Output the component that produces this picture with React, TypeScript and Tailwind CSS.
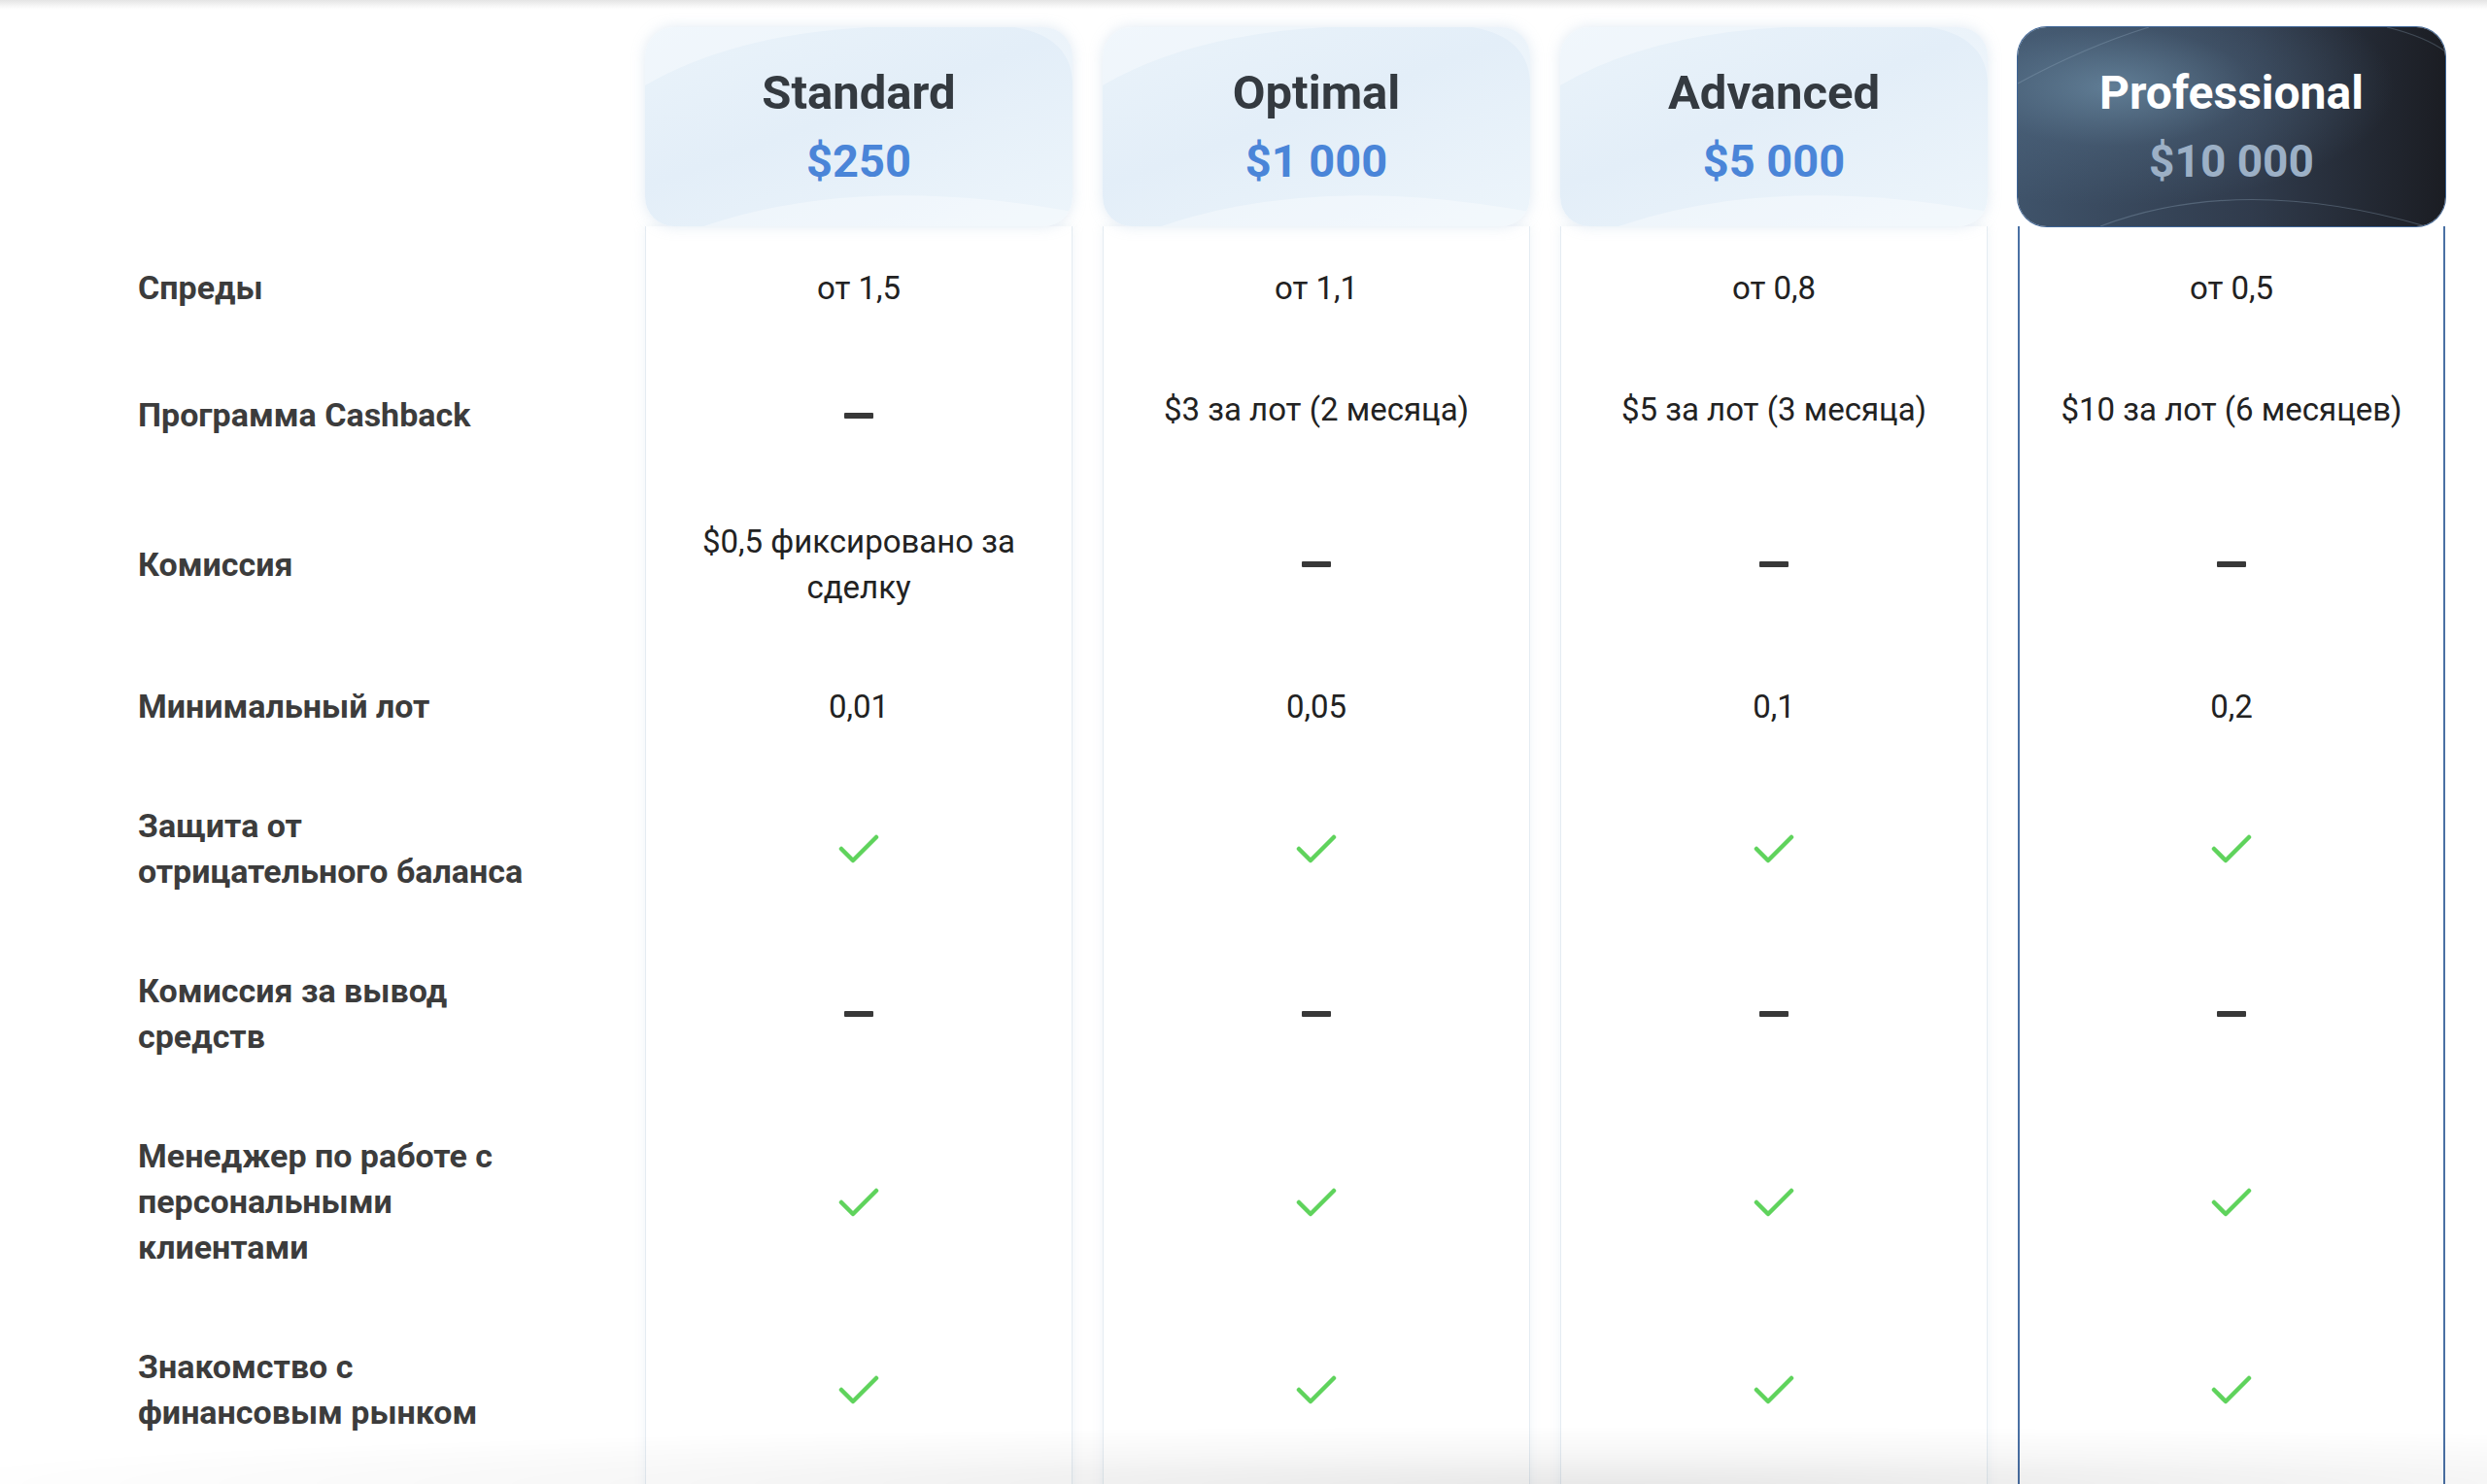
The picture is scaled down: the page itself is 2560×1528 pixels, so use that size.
import React from "react";

type Cell = string | string[] | "DASH" | "CHECK";

const Dash = () => <div className="w-[30px] h-[6px] bg-[#383838] rounded-[1px]" />;

const Check = () => (
  <svg width="42" height="32" viewBox="0 0 42 32" fill="none">
    <polyline points="3,16 15,28 39,4" stroke="#5fd35c" strokeWidth="4.5" strokeLinecap="round" strokeLinejoin="round" />
  </svg>
);

const rows: { label: string[]; h: string; values: Cell[]; shift?: boolean }[] = [
  { label: ["Спреды"], h: "h-[126px]", values: ["от 1,5", "от 1,1", "от 0,8", "от 0,5"] },
  {
    label: ["Программа Cashback"],
    h: "h-[137px]",
    values: ["DASH", "$3 за лот (2 месяца)", "$5 за лот (3 месяца)", "$10 за лот (6 месяцев)"],
    shift: true,
  },
  { label: ["Комиссия"], h: "h-[170px]", values: [["$0,5 фиксировано за", "сделку"], "DASH", "DASH", "DASH"] },
  { label: ["Минимальный лот"], h: "h-[123px]", values: ["0,01", "0,05", "0,1", "0,2"] },
  { label: ["Защита от", "отрицательного баланса"], h: "h-[170px]", values: ["CHECK", "CHECK", "CHECK", "CHECK"] },
  { label: ["Комиссия за вывод", "средств"], h: "h-[170px]", values: ["DASH", "DASH", "DASH", "DASH"] },
  {
    label: ["Менеджер по работе с", "персональными", "клиентами"],
    h: "h-[217px]",
    values: ["CHECK", "CHECK", "CHECK", "CHECK"],
  },
  { label: ["Знакомство с", "финансовым рынком"], h: "h-[170px]", values: ["CHECK", "CHECK", "CHECK", "CHECK"] },
  { label: [""], h: "h-[120px]", values: ["", "", "", ""] },
];

const plans = [
  { name: "Standard", price: "$250" },
  { name: "Optimal", price: "$1 000" },
  { name: "Advanced", price: "$5 000" },
  { name: "Professional", price: "$10 000", dark: true },
];

function renderCell(v: Cell, shift?: boolean) {
  if (v === "DASH") return <Dash />;
  if (v === "CHECK") return <Check />;
  const lines = Array.isArray(v) ? v : [v];
  return (
    <div className={`text-center text-[33px] leading-[47px] text-[#222222] ${shift ? "pb-[12px]" : ""}`}>
      {lines.map((l, i) => (
        <div key={i}>{l}</div>
      ))}
    </div>
  );
}

function LightHeader({ name, price }: { name: string; price: string }) {
  return (
    <div className="relative h-[205px] rounded-[30px] overflow-hidden bg-[linear-gradient(160deg,#eaf3fa_0%,#e3eef8_45%,#edf5fb_100%)] shadow-[0_0_14px_rgba(170,195,220,0.35)] flex flex-col items-center pt-[38px]">
      <svg className="absolute inset-0 w-full h-full" viewBox="0 0 440 205" preserveAspectRatio="none">
        <path d="M0 60 Q 120 -10 330 0 L 0 0 Z" fill="#ffffff" opacity="0.35" />
        <path d="M60 205 Q 220 150 440 190 L 440 205 Z" fill="#ffffff" opacity="0.35" />
        <path d="M380 0 Q 440 10 440 60 L 440 0 Z" fill="#ffffff" opacity="0.3" />
      </svg>
      <div className="relative text-[49px] leading-[60px] font-bold text-[#343a40]">{name}</div>
      <div className="relative mt-[10px] text-[47px] leading-[60px] font-bold text-[#4a85d8]">{price}</div>
    </div>
  );
}

function DarkHeader({ name, price }: { name: string; price: string }) {
  return (
    <div className="relative h-[205px] rounded-[30px] overflow-hidden bg-[radial-gradient(ellipse_at_22%_30%,#607d95_0%,rgba(80,105,130,0.4)_30%,rgba(0,0,0,0)_60%),linear-gradient(90deg,#3f536a_0%,#303b4c_55%,#1b1d23_100%)] flex flex-col items-center pt-[38px] ring-1 ring-[#3d6496]">
      <svg className="absolute inset-0 w-full h-full" viewBox="0 0 440 205" preserveAspectRatio="none" fill="none">
        <path d="M0 58 Q 70 20 135 0" stroke="#8fa6bb" strokeOpacity="0.35" strokeWidth="1.2" />
        <path d="M380 0 Q 420 10 440 25" stroke="#8fa6bb" strokeOpacity="0.3" strokeWidth="1.2" />
        <path d="M85 205 Q 230 150 420 205" stroke="#8fa6bb" strokeOpacity="0.35" strokeWidth="1.2" />
      </svg>
      <div className="relative text-[48px] leading-[60px] font-bold text-white">{name}</div>
      <div className="relative mt-[10px] text-[46px] leading-[60px] font-bold text-[#9cb0c6]">{price}</div>
    </div>
  );
}

export default function App() {
  return (
    <div
      className="relative w-[2560px] min-h-[1528px] bg-white overflow-hidden"
      style={{ fontFamily: "Roboto, 'Noto Sans', 'Liberation Sans', sans-serif" }}
    >
      <div className="h-[10px] bg-[linear-gradient(180deg,#e4e4e4_0%,#f6f6f6_60%,#ffffff_100%)]" />
      <div className="flex pt-[18px]">
        <div className="w-[664px] pl-[142px] flex flex-col">
          <div className="h-[205px]" />
          {rows.map((r, i) => (
            <div key={i} className={`${r.h} flex items-center`}>
              <div className="text-[34px] leading-[47px] font-bold text-[#3c3c3c]">
                {r.label.map((l, j) => (
                  <div key={j}>{l}</div>
                ))}
              </div>
            </div>
          ))}
        </div>
        <div className="flex gap-[31px]">
          {plans.map((p, ci) => (
            <div key={ci} className="w-[440px] flex flex-col">
              {p.dark ? <DarkHeader name={p.name} price={p.price} /> : <LightHeader name={p.name} price={p.price} />}
              <div
                className={
                  p.dark
                    ? "flex flex-col bg-white border-x-2 border-[#4a70a4]"
                    : "flex flex-col bg-white border-x border-[#e4ecf2] shadow-[0_0_10px_rgba(190,210,225,0.25)]"
                }
              >
                {rows.map((r, ri) => (
                  <div key={ri} className={`${r.h} flex items-center justify-center`}>
                    {renderCell(r.values[ci], r.shift)}
                  </div>
                ))}
              </div>
            </div>
          ))}
        </div>
      </div>
      <div className="fixed left-0 right-0 bottom-0 h-[60px] pointer-events-none bg-[radial-gradient(ellipse_70%_100%_at_65%_100%,rgba(0,0,0,0.09)_0%,rgba(0,0,0,0.03)_55%,rgba(0,0,0,0)_100%)]" />
    </div>
  );
}
